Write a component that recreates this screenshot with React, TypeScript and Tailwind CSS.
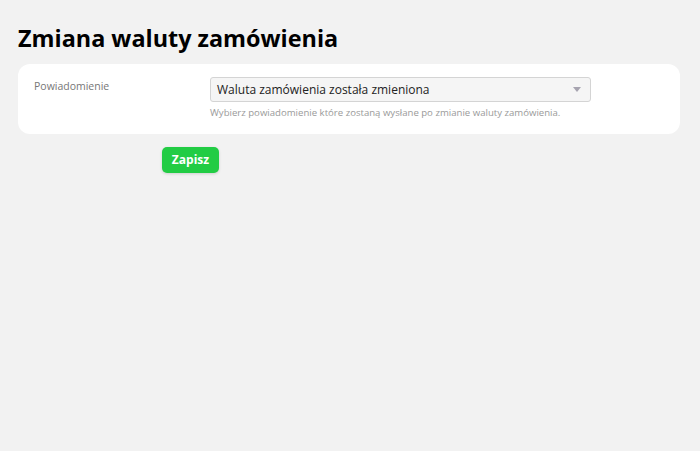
export default function App() {
  return (
    <div
      className="min-h-[451px] bg-[#f2f2f2] pl-[18px] pr-[20px] pt-[22px]"
      style={{ fontFamily: '"Open Sans", "Noto Sans", sans-serif' }}
    >
      <h1 className="text-[23.4px] font-bold leading-[32px] text-black">
        Zmiana waluty zamówienia
      </h1>

      <div className="mt-[10px] rounded-[12px] bg-white px-4 pt-[13px] pb-[14px]">
        <div className="flex">
          <label className="w-[176px] pt-[2px] text-[10.5px] leading-[14px] text-[#777]">
            Powiadomienie
          </label>
          <div className="w-[381px]">
            <div className="flex h-[25px] items-center justify-between rounded-[3px] border border-[#d4d4d4] bg-[#f5f5f5] pl-[6px] pr-[9px]">
              <span className="text-[12px] text-[#222]">
                Waluta zamówienia została zmieniona
              </span>
              <span className="h-0 w-0 border-x-[4.5px] border-t-[5px] border-x-transparent border-t-[#a7a4b0]" />
            </div>
            <p className="mt-[4px] text-[9.6px] leading-[14px] text-[#9a9a9a]">
              Wybierz powiadomienie które zostaną wysłane po zmianie waluty
              zamówienia.
            </p>
          </div>
        </div>
      </div>

      <button className="ml-[144px] mt-[13px] h-[26px] w-[57px] rounded-[5px] bg-[#22cc44] text-[12px] font-bold text-white shadow-[0_1px_3px_rgba(0,0,0,0.15)]">
        Zapisz
      </button>
    </div>
  );
}
